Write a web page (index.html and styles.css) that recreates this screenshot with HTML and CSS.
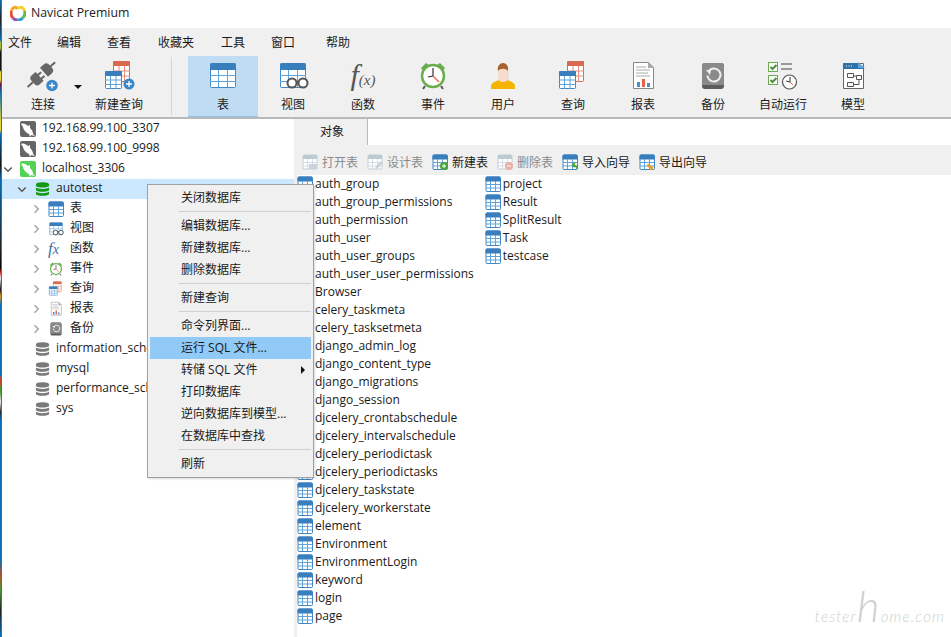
FILE: index.html
```html
<!DOCTYPE html>
<html lang="en">
<head>
    <meta charset="UTF-8">
    <title>Navicat Premium</title>
    <link rel="stylesheet" href="styles.css">
</head>
<body>
    <svg class="defs" aria-hidden="true">
        <symbol id="tb" viewBox="0 0 16 16">
            <rect x="1" y="1" width="14.5" height="14.5" rx="1" fill="#fff" stroke="#3f87c5"/>
            <path d="M.5 5.500V2A1.500 1.500 0 0 1 2 .5h12A1.500 1.500 0 0 1 15.500 2v3.500z" fill="#3a7fbd"/>
            <path d="M1 8.500h14M1 12h14M5.500 5v10M10.500 5v10" stroke="#5fa3da" fill="none"/>
        </symbol>
        <symbol id="tbg" viewBox="0 0 16 16">
            <rect x="1" y="1" width="14" height="14" rx="1" fill="#fff" stroke="#c3ced6"/>
            <path d="M1 5V2a1 1 0 0 1 1-1h12a1 1 0 0 1 1 1v3z" fill="#bccad4"/>
            <path d="M1 8.500h14M1 12h14M5.500 5v10M10.500 5v10" stroke="#d4dde3" fill="none"/>
        </symbol>
        <symbol id="i-table" viewBox="0 0 32 32">
            <rect x="3.500" y="3.500" width="25" height="24" rx="1" fill="#fff" stroke="#3f87c5"/>
            <path d="M3 10V5a2 2 0 0 1 2-2h22a2 2 0 0 1 2 2v5z" fill="#3a7fbd"/>
            <path d="M3 15.500h26M3 21.500h26M11.500 10v17M20.500 10v17" stroke="#5fa3da" fill="none"/>
        </symbol>
        <symbol id="i-redtable" viewBox="0 0 32 32">
            <rect x="10.500" y="1.500" width="16" height="20" rx="1" fill="#fff" stroke="#d9694f"/>
            <path d="M10 6V2a1 1 0 0 1 1-1h15a1 1 0 0 1 1 1v4z" fill="#d9694f"/>
            <path d="M10 11h17M10 16h17M16 6v16M21.500 6v16" stroke="#e48f7b" fill="none"/>
            <rect x="2.500" y="11.500" width="16" height="17" rx="1" fill="#fff" stroke="#3f87c5"/>
            <path d="M2 16v-4a1 1 0 0 1 1-1h15a1 1 0 0 1 1 1v4z" fill="#3a7fbd"/>
            <path d="M2 20h17M2 24.500h17M7.500 16v13M13 16v13" stroke="#5fa3da" fill="none"/>
        </symbol>
        <symbol id="i-plug" viewBox="0 0 32 32">
            <g transform="rotate(-42 14 15)" fill="#666">
                <path d="M-4 14h7v2h-7z"/>
                <path d="M7 9h5v3h4v2h-4v3h4v2h-4v2H7a4 4 0 0 1-4-4v-4a4 4 0 0 1 4-4z"/>
                <path d="M18 9h5a4 4 0 0 1 4 4v1h6v2h-6v1a4 4 0 0 1-4 4h-5z"/>
            </g>
            <circle cx="25" cy="25.500" r="5.800" fill="#3a87c8"/>
            <path d="M25 22.500v6M22 25.500h6" stroke="#fff" stroke-width="1.300"/>
        </symbol>
        <symbol id="i-newquery" viewBox="0 0 32 32">
            <use href="#i-redtable"/>
            <circle cx="26" cy="24" r="5.500" fill="#3a87c8"/>
            <path d="M26 21v6M23 24h6" stroke="#fff" stroke-width="1.300"/>
        </symbol>
        <symbol id="i-view" viewBox="0 0 32 32">
            <use href="#i-table"/>
            <circle cx="15" cy="23" r="4.500" fill="#fff" stroke="#555" stroke-width="2"/>
            <circle cx="26" cy="23" r="4.500" fill="#fff" stroke="#555" stroke-width="2"/>
            <path d="M19 22h3" stroke="#555" stroke-width="2"/>
        </symbol>
        <symbol id="i-clock" viewBox="0 0 32 32">
            <path d="M4 8l5-5 3 2-6 6zM28 8l-5-5-3 2 6 6z" fill="#6aad4f"/>
            <path d="M8 26l-2 3M24 26l2 3" stroke="#555" stroke-width="2"/>
            <circle cx="16" cy="16" r="11" fill="#fff" stroke="#6aad4f" stroke-width="2.500"/>
            <path d="M16 8v8l-5 1" stroke="#333" fill="none" stroke-width="1.200"/>
            <path d="M16 16l6 6" stroke="#e8604c" stroke-width="1.200"/>
        </symbol>
        <symbol id="i-user" viewBox="0 0 32 32">
            <path d="M4 29v-3c0-3 5-5 8-6h8c3 1 8 3 8 6v3z" fill="#f4b400"/>
            <path d="M11 9h10v8c0 3-2 5-5 5s-5-2-5-5z" fill="#f7dccb"/>
            <path d="M11 11c-1-5 2-8 5-8s6 3 5 8c-2-3-8-3-10 0z" fill="#a8622b"/>
            <path d="M21 11v7l-1 2" stroke="#d8d8d8" fill="none"/>
        </symbol>
        <symbol id="i-report" viewBox="0 0 32 32">
            <path d="M6.500 2.500h15l5 5v21h-20z" fill="#fff" stroke="#888"/>
            <path d="M21 2l6 6h-6z" fill="#aaa"/>
            <path d="M9 7h10M9 10h14M9 13h12M9 16h14" stroke="#aaa"/>
            <path d="M10 22h3v5h-3z" fill="#4a90d0"/>
            <path d="M15 19h3v8h-3z" fill="#e8604c"/>
            <path d="M20 23h3v4h-3z" fill="#4a90d0"/>
        </symbol>
        <symbol id="i-backup" viewBox="0 0 32 32">
            <rect x="5" y="3" width="22" height="26" rx="3" fill="#5c5c5c"/>
            <path d="M5 6a3 3 0 0 1 3-3h16a3 3 0 0 1 3 3v19H5z" fill="#8a8a8a"/>
            <path d="M11.500 11.500a6.500 6.500 0 1 1-1 4" stroke="#eee" stroke-width="2" fill="none"/>
            <path d="M9 10l5 0-1 5z" fill="#eee"/>
        </symbol>
        <symbol id="i-auto" viewBox="0 0 32 32">
            <rect x="1.500" y="2.500" width="9" height="9" fill="#fff" stroke="#6aad4f"/>
            <rect x="1.500" y="15.500" width="9" height="9" fill="#fff" stroke="#6aad4f"/>
            <path d="M3.500 7l2 2 4-4M3.500 20l2 2 4-4" stroke="#4b8f3a" stroke-width="2" fill="none"/>
            <path d="M14 4h11M14 9h11" stroke="#999" stroke-width="2"/>
            <circle cx="22.500" cy="22" r="7" fill="#fff" stroke="#555" stroke-width="1.200"/>
            <path d="M23 17v5l-4-1" stroke="#333" fill="none"/>
            <path d="M23 22l3 3" stroke="#e8604c"/>
        </symbol>
        <symbol id="i-model" viewBox="0 0 32 32">
            <path d="M6.500 3.500h20v25h-20z" fill="#fff" stroke="#666"/>
            <path d="M6 3h15l6 5v1H6z" fill="#2f72a8"/>
            <path d="M21 2l7 6h-7z" fill="#5aa5e0"/>
            <path d="M9 6h1M11.500 6h1M14 6h1" stroke="#fff"/>
            <path d="M10.500 13.500h6v4h-6zM19.500 15.500h5v4h-5zM10.500 22.500h6v4h-6zM16.500 16h3M22 20v4.500h-5.500" stroke="#555" fill="#fff"/>
        </symbol>
        <symbol id="dolphin" viewBox="0 0 16 16">
            <rect width="16" height="16" rx="2" fill="currentColor"/>
            <path d="M1 3c2-1 5 0 7 2l2-1v3c2 2 3 4 3 6l2 2-4-1-1 2-1-3C6 12 3 8 3 6z" fill="#fff"/>
        </symbol>
        <symbol id="db" viewBox="0 0 16 16">
            <path d="M1 3c0-3 14-3 14 0v1.500c0 2.500-14 2.500-14 0zM1 6.500c2 2 12 2 14 0V9c0 2.500-14 2.500-14 0zM1 11c2 2 12 2 14 0v2c0 3-14 3-14 0z" fill="currentColor"/>
        </symbol>
        <symbol id="arrow-r" viewBox="0 0 16 16">
            <path d="M6 3l5 5-5 5" fill="none" stroke="#a6a6a6" stroke-width="2"/>
        </symbol>
        <symbol id="arrow-d" viewBox="0 0 16 16">
            <path d="M3 6l5 5 5-5" fill="none" stroke="#555" stroke-width="2"/>
        </symbol>
    </svg>

    <div class="edge"></div>
    <div class="window">
        <div class="titlebar">
            <svg class="logo" viewBox="0 0 16 16">
                <path d="M3 13a6.500 6.500 0 0 1-1.500-7" stroke="#e94b35" stroke-width="3" fill="none"/>
                <path d="M1.500 6C2 3 5 1 8 3.500" stroke="#f5a623" stroke-width="3" fill="none"/>
                <path d="M8 3.500C11 1 14 3 14.500 6" stroke="#f2d12e" stroke-width="3" fill="none"/>
                <path d="M14.500 6a6.500 6.500 0 0 1-2 7" stroke="#65bb4a" stroke-width="3" fill="none"/>
                <path d="M12.500 13a6 6 0 0 1-5 2" stroke="#2f9bd8" stroke-width="3" fill="none"/>
                <path d="M7.500 15A6 6 0 0 1 3 13" stroke="#8d52a8" stroke-width="3" fill="none"/>
            </svg>
            <span>Navicat Premium</span>
        </div>

        <div class="menubar">
            <span>文件</span>
            <span>编辑</span>
            <span>查看</span>
            <span>收藏夹</span>
            <span>工具</span>
            <span>窗口</span>
            <span>帮助</span>
        </div>

        <div class="toolbar">
            <div class="tool tool-connect"><svg><use href="#i-plug"/></svg>连接</div>
            <i class="drop"></i>
            <div class="tool tool-newquery"><svg><use href="#i-newquery"/></svg>新建查询</div>
            <div class="tool-sep"></div>
            <div class="tool active"><svg><use href="#i-table"/></svg>表</div>
            <div class="tool"><svg><use href="#i-view"/></svg>视图</div>
            <div class="tool"><span class="bigfx">f<b>(x)</b></span>函数</div>
            <div class="tool"><svg><use href="#i-clock"/></svg>事件</div>
            <div class="tool"><svg><use href="#i-user"/></svg>用户</div>
            <div class="tool"><svg><use href="#i-redtable"/></svg>查询</div>
            <div class="tool"><svg><use href="#i-report"/></svg>报表</div>
            <div class="tool"><svg><use href="#i-backup"/></svg>备份</div>
            <div class="tool"><svg><use href="#i-auto"/></svg>自动运行</div>
            <div class="tool"><svg><use href="#i-model"/></svg>模型</div>
        </div>

        <div class="main">
            <div class="tree">
                <div class="row lv0"><span class="chev"></span><svg class="ico srv"><use href="#dolphin"/></svg>192.168.99.100_3307</div>
                <div class="row lv0"><span class="chev"></span><svg class="ico srv"><use href="#dolphin"/></svg>192.168.99.100_9998</div>
                <div class="row lv0"><svg class="chev"><use href="#arrow-d"/></svg><svg class="ico srv on"><use href="#dolphin"/></svg>localhost_3306</div>
                <div class="row lv1 selected"><svg class="chev"><use href="#arrow-d"/></svg><svg class="ico dbi on"><use href="#db"/></svg>autotest</div>
                <div class="row lv2"><svg class="chev"><use href="#arrow-r"/></svg><svg class="ico"><use href="#tb"/></svg>表</div>
                <div class="row lv2"><svg class="chev"><use href="#arrow-r"/></svg><svg class="ico"><use href="#i-view"/></svg>视图</div>
                <div class="row lv2"><svg class="chev"><use href="#arrow-r"/></svg><span class="ico fx">f<b>x</b></span>函数</div>
                <div class="row lv2"><svg class="chev"><use href="#arrow-r"/></svg><svg class="ico"><use href="#i-clock"/></svg>事件</div>
                <div class="row lv2"><svg class="chev"><use href="#arrow-r"/></svg><svg class="ico"><use href="#i-redtable"/></svg>查询</div>
                <div class="row lv2"><svg class="chev"><use href="#arrow-r"/></svg><svg class="ico"><use href="#i-report"/></svg>报表</div>
                <div class="row lv2"><svg class="chev"><use href="#arrow-r"/></svg><svg class="ico"><use href="#i-backup"/></svg>备份</div>
                <div class="row lv1"><span class="chev"></span><svg class="ico dbi"><use href="#db"/></svg>information_schema</div>
                <div class="row lv1"><span class="chev"></span><svg class="ico dbi"><use href="#db"/></svg>mysql</div>
                <div class="row lv1"><span class="chev"></span><svg class="ico dbi"><use href="#db"/></svg>performance_schema</div>
                <div class="row lv1"><span class="chev"></span><svg class="ico dbi"><use href="#db"/></svg>sys</div>
            </div>

            <div class="content">
                <div class="tabs">
                    <div class="tab">对象</div>
                    <div class="tab-rest"></div>
                </div>
                <div class="objbar">
                    <span class="objbtn off"><svg class="ico" viewBox="0 0 16 16"><use href="#tbg"/><path d="M7 10h8v5H7z" fill="#c9d2d8"/></svg>打开表</span>
                    <span class="objbtn off"><svg class="ico" viewBox="0 0 16 16"><use href="#tbg"/><path d="M8 15l1-3 5-5 2 2-5 5z" fill="#c9d2d8"/></svg>设计表</span>
                    <span class="objbtn"><svg class="ico" viewBox="0 0 16 16"><use href="#tb"/><circle cx="12" cy="12" r="4" fill="#4aa53a"/><path d="M12 10v4M10 12h4" stroke="#fff"/></svg>新建表</span>
                    <span class="objbtn off"><svg class="ico" viewBox="0 0 16 16"><use href="#tbg"/><circle cx="12" cy="12" r="4" fill="#eab0a6"/><path d="M10 12h4" stroke="#fff"/></svg>删除表</span>
                    <span class="objbtn"><svg class="ico" viewBox="0 0 16 16"><use href="#tb"/><path d="M15 15c0-3-2-4-5-4M10 11l3-2M10 11l3 2" stroke="#4aa53a" stroke-width="1.600" fill="none"/></svg>导入向导</span>
                    <span class="objbtn"><svg class="ico" viewBox="0 0 16 16"><use href="#tb"/><path d="M9 10c0 3 2 4 5 4M14 14l-3-2M14 14l-3 2" stroke="#ee9a1f" stroke-width="1.600" fill="none"/></svg>导出向导</span>
                </div>
                <div class="objects">
                    <div class="obj"><svg class="ico"><use href="#tb"/></svg>auth_group</div>
                    <div class="obj"><svg class="ico"><use href="#tb"/></svg>auth_group_permissions</div>
                    <div class="obj"><svg class="ico"><use href="#tb"/></svg>auth_permission</div>
                    <div class="obj"><svg class="ico"><use href="#tb"/></svg>auth_user</div>
                    <div class="obj"><svg class="ico"><use href="#tb"/></svg>auth_user_groups</div>
                    <div class="obj"><svg class="ico"><use href="#tb"/></svg>auth_user_user_permissions</div>
                    <div class="obj"><svg class="ico"><use href="#tb"/></svg>Browser</div>
                    <div class="obj"><svg class="ico"><use href="#tb"/></svg>celery_taskmeta</div>
                    <div class="obj"><svg class="ico"><use href="#tb"/></svg>celery_tasksetmeta</div>
                    <div class="obj"><svg class="ico"><use href="#tb"/></svg>django_admin_log</div>
                    <div class="obj"><svg class="ico"><use href="#tb"/></svg>django_content_type</div>
                    <div class="obj"><svg class="ico"><use href="#tb"/></svg>django_migrations</div>
                    <div class="obj"><svg class="ico"><use href="#tb"/></svg>django_session</div>
                    <div class="obj"><svg class="ico"><use href="#tb"/></svg>djcelery_crontabschedule</div>
                    <div class="obj"><svg class="ico"><use href="#tb"/></svg>djcelery_intervalschedule</div>
                    <div class="obj"><svg class="ico"><use href="#tb"/></svg>djcelery_periodictask</div>
                    <div class="obj"><svg class="ico"><use href="#tb"/></svg>djcelery_periodictasks</div>
                    <div class="obj"><svg class="ico"><use href="#tb"/></svg>djcelery_taskstate</div>
                    <div class="obj"><svg class="ico"><use href="#tb"/></svg>djcelery_workerstate</div>
                    <div class="obj"><svg class="ico"><use href="#tb"/></svg>element</div>
                    <div class="obj"><svg class="ico"><use href="#tb"/></svg>Environment</div>
                    <div class="obj"><svg class="ico"><use href="#tb"/></svg>EnvironmentLogin</div>
                    <div class="obj"><svg class="ico"><use href="#tb"/></svg>keyword</div>
                    <div class="obj"><svg class="ico"><use href="#tb"/></svg>login</div>
                    <div class="obj"><svg class="ico"><use href="#tb"/></svg>page</div>
                    <div class="obj"><svg class="ico"><use href="#tb"/></svg>project</div>
                    <div class="obj"><svg class="ico"><use href="#tb"/></svg>Result</div>
                    <div class="obj"><svg class="ico"><use href="#tb"/></svg>SplitResult</div>
                    <div class="obj"><svg class="ico"><use href="#tb"/></svg>Task</div>
                    <div class="obj"><svg class="ico"><use href="#tb"/></svg>testcase</div>
                </div>
            </div>
        </div>
    </div>

    <!-- context menu sits over the tree and the object list -->
    <div class="ctx">
        <div class="ctx-item">关闭数据库</div>
        <div class="ctx-sep"></div>
        <div class="ctx-item">编辑数据库...</div>
        <div class="ctx-item">新建数据库...</div>
        <div class="ctx-item">删除数据库</div>
        <div class="ctx-sep"></div>
        <div class="ctx-item">新建查询</div>
        <div class="ctx-sep"></div>
        <div class="ctx-item">命令列界面...</div>
        <div class="ctx-item hover">运行 SQL 文件...</div>
        <div class="ctx-item sub">转储 SQL 文件</div>
        <div class="ctx-item">打印数据库</div>
        <div class="ctx-item">逆向数据库到模型...</div>
        <div class="ctx-item">在数据库中查找</div>
        <div class="ctx-sep"></div>
        <div class="ctx-item">刷新</div>
    </div>

    <div class="watermark">tester<span>h</span>ome.com</div>
</body>
</html>
```

FILE: styles.css
```css
html, body {
    margin: 0;
    height: 637px;
    overflow: hidden;
}
body {
    display: flex;
    font-family: "Open Sans", "Noto Sans CJK SC", sans-serif;
    font-size: 12px;
    color: #1a1a1a;
    background: #fff;
    position: relative;
}
.defs {
    position: absolute;
    width: 0;
    height: 0;
}

/* bit of the desktop showing at the left of the window */
.edge {
    flex: 0 0 2px;
    background:
        linear-gradient(to right, transparent 1px, #0a7fd6 1px),
        linear-gradient(to bottom, #0a6db5 0, #222 20px, #0a6db5 40px, #9ac43c 42px, #9ac43c 48px, #111 52px, #111 70px, #e4d63a 72px, #e4d63a 80px, #6a1030 84px, #0a6db5 92px, #e4d63a 122px, #e4d63a 130px, #0a6db5 134px, #111 165px, #0a6db5 180px, #222 250px, #000 268px, #d81e1e 272px, #eee 278px, #111 290px, #e89a1e 296px, #0a6db5 305px, #0a6db5 375px, #b8502c 378px, #b8502c 385px, #4a9a3a 387px, #4a9a3a 392px, #eee 402px, #222 412px, #0a6db5 420px, #0a6db5 560px, #b8502c 575px, #4a9a3a 590px, #222 610px, #0a6db5 637px);
}
.window {
    flex: 1;
    display: flex;
    flex-direction: column;
    min-width: 0;
}

.titlebar {
    height: 28px;
    display: flex;
    align-items: center;
    gap: 5px;
    padding-left: 8px;
    font-size: 12.300px;
    color: #222;
    box-sizing: border-box;
    padding-bottom: 3px;
}
.logo {
    width: 16px;
    height: 16px;
}

.menubar {
    height: 28px;
    display: grid;
    grid-template-columns: 49px 50px 51px 63px 50px 55px auto;
    align-items: center;
    padding-left: 6px;
    background: #f0f0f0;
}

.toolbar {
    height: 61px;
    display: flex;
    background: #f0f0f0;
    border-bottom: 2px solid #b9b9b9;
}
.tool {
    width: 70px;
    display: flex;
    flex-direction: column;
    align-items: center;
    padding-top: 4px;
    box-sizing: border-box;
    line-height: 16px;
}
.tool svg {
    width: 32px;
    height: 32px;
    margin-bottom: 5px;
}
.tool.active {
    background: #bfdcf3;
    border-bottom: 1px solid #8fc3ee;
}
.bigfx {
    height: 32px;
    margin-bottom: 5px;
    font: italic 30px/30px "Liberation Serif", serif;
    color: #555;
}
.bigfx b {
    font-weight: normal;
    font-size: 15px;
}
.tool-connect {
    margin-left: 6px;
}
.drop {
    width: 0;
    height: 0;
    margin: 29px 0 0 -4px;
    border: 4px solid transparent;
    border-top-color: #111;
    border-bottom: 0;
}
.tool-newquery {
    margin-left: 2px;
}
.tool-sep {
    width: 1px;
    height: 58px;
    margin: 1px 16px 0 17px;
    background: #d6d6d6;
}

.main {
    flex: 1;
    display: flex;
    min-height: 0;
}

.tree {
    width: 292px;
    flex: none;
    border-right: 3px solid #f0f0f0;
    white-space: nowrap;
    overflow: hidden;
}
.row {
    height: 20px;
    display: flex;
    align-items: flex-start;
    gap: 6px;
    line-height: 18px;
}
.row.selected {
    background: #cce8ff;
}
.chev {
    width: 12px;
    height: 12px;
    flex: none;
    margin-top: 4px;
}
.lv1 { padding-left: 14px; }
.lv2 { padding-left: 28px; }
.lv1 .chev { margin-right: 1px; }
.ico {
    width: 16px;
    height: 16px;
    flex: none;
}
.row .ico {
    margin-top: 2px;
}
.srv { color: #666; }
.srv.on { color: #53d353; }
.dbi { color: #7a7a7a; width: 15px; }
.dbi.on { color: #149a14; }
.fx {
    font: italic 17px "Liberation Serif", serif;
    color: #3f6f9f;
    line-height: 16px;
}
.fx b {
    font-weight: normal;
    font-size: 14px;
}

.content {
    flex: 1;
    display: flex;
    flex-direction: column;
    min-width: 0;
}
.tabs {
    height: 26px;
    display: flex;
    background: #f0f0f0;
}
.tab {
    width: 71px;
    text-align: center;
    line-height: 26px;
    border-right: 1px solid #b9b9b9;
    box-sizing: border-box;
}
.tab-rest {
    flex: 1;
    background: #fff;
}
.objbar {
    height: 30px;
    box-sizing: border-box;
    padding: 4px 0 0 5px;
    display: flex;
    align-items: center;
    gap: 9px;
    background: #f0f0f0;
}
.objbtn {
    display: flex;
    align-items: center;
    gap: 4px;
}
.objbtn.off {
    color: #8a8a8a;
}
.objects {
    flex: 1;
    display: grid;
    grid-template-rows: repeat(25, 18px);
    grid-auto-flow: column;
    grid-auto-columns: max-content;
    column-gap: 11px;
}
.obj {
    display: flex;
    align-items: flex-start;
    gap: 2px;
    line-height: 18px;
}
.obj .ico {
    margin-top: 1px;
}

.ctx {
    position: absolute;
    left: 147px;
    top: 184px;
    width: 167px;
    box-sizing: border-box;
    padding: 2px;
    background: #f0f0f0;
    border: 1px solid #a0a0a0;
    box-shadow: 1px 1px 2px rgba(0, 0, 0, 0.15);
}
.ctx-item {
    height: 22px;
    line-height: 22px;
    padding-left: 31px;
    position: relative;
}
.ctx-item.hover {
    background: #91c9f7;
}
.ctx-item.sub::after {
    content: "";
    position: absolute;
    right: 6px;
    top: 7px;
    border: 4px solid transparent;
    border-left-color: #111;
    border-right: 0;
}
.ctx-sep {
    height: 1px;
    margin: 2px 0 3px 29px;
    background: #d0d0d0;
}

.watermark {
    position: absolute;
    right: 6px;
    bottom: 12px;
    font: italic 300 15px Lato, sans-serif;
    letter-spacing: 1.200px;
    color: #cfcfcf;
}
.watermark span {
    font-size: 44px;
    line-height: 30px;
}
```
